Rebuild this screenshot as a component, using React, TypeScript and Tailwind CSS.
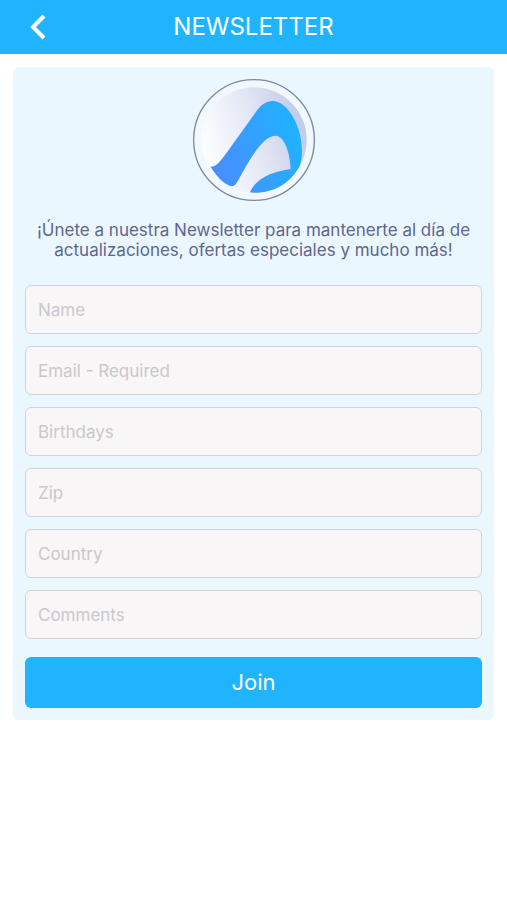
import { useId } from "react";

const fields = [
  { label: "Name", type: "text" },
  { label: "Email - Required", type: "email" },
  { label: "Birthdays", type: "text" },
  { label: "Zip", type: "text" },
  { label: "Country", type: "text" },
  { label: "Comments", type: "text" },
];

function Logo() {
  return (
    <svg viewBox="27 27 366 366" className="size-[122px]" role="img" aria-label="Logo">
      <defs>
        <linearGradient id="disc" gradientUnits="userSpaceOnUse" x1="70" y1="250" x2="370" y2="160">
          <stop offset="0" stopColor="#fcfdff" />
          <stop offset="0.5" stopColor="#e2e7f5" />
          <stop offset="1" stopColor="#bfc9e8" />
        </linearGradient>
        <linearGradient id="wave" gradientUnits="userSpaceOnUse" x1="80" y1="320" x2="355" y2="220">
          <stop offset="0" stopColor="#4b8bff" />
          <stop offset="1" stopColor="#20b2ff" />
        </linearGradient>
      </defs>
      <circle cx="210" cy="210" r="181" fill="#f1f8ff" stroke="#7f86a0" strokeWidth="4" />
      <circle cx="210" cy="210" r="158" fill="url(#disc)" />
      <path
        d="M79 290C97 291 110 272 123 255L214 128C232 103 247 93 266 93C312 93 354 170 354 242C354 262 352 275 347 287C322 336 274 369 208 368L198 367C216 324 264 305 320 297C318 248 301 197 274 197C240 197 204 258 180 299L163 330C154 347 148 351 137 347C116 339 97 317 79 290Z"
        fill="url(#wave)"
      />
    </svg>
  );
}

export default function App() {
  const formId = useId();

  return (
    <div className="min-h-screen bg-white font-['Inter',sans-serif]">
      <header className="grid h-[54px] grid-cols-[54px_1fr_54px] items-center bg-[#20b4ff] text-white">
        <button type="button" aria-label="Back" className="flex h-full items-center justify-end pr-2">
          <svg viewBox="0 0 16 26" className="h-[26px] w-4" fill="none" stroke="currentColor" strokeWidth="4">
            <path d="M14 2L3 13L14 24" />
          </svg>
        </button>
        <h1 className="text-center text-2xl font-normal">NEWSLETTER</h1>
      </header>

      <main className="p-[13px]">
        <form
          className="flex flex-col rounded-md bg-[#ebf7ff] p-3"
          onSubmit={(event) => event.preventDefault()}
        >
          <div className="flex justify-center">
            <Logo />
          </div>
          <p className="mt-[19px] text-center text-[17px] leading-5 text-[#5f668e]">
            ¡Únete a nuestra Newsletter para mantenerte al día de actualizaciones, ofertas especiales y mucho más!
          </p>
          <div className="mt-[25px] flex flex-col gap-3">
            {fields.map(({ label, type }) => (
              <div key={label} className="flex">
                <input
                  id={`${formId}-${label}`}
                  type={type}
                  aria-label={label}
                  placeholder={label}
                  className="h-[49px] w-full rounded-md border border-[#d3d3da] bg-[#f8f6f7] px-3 text-[17px] text-[#5f668e] placeholder:text-[#c9c8cc]"
                />
              </div>
            ))}
          </div>
          <button type="submit" className="mt-[18px] h-[51px] rounded-md bg-[#20b4ff] text-[22px] text-white">
            Join
          </button>
        </form>
      </main>
    </div>
  );
}
